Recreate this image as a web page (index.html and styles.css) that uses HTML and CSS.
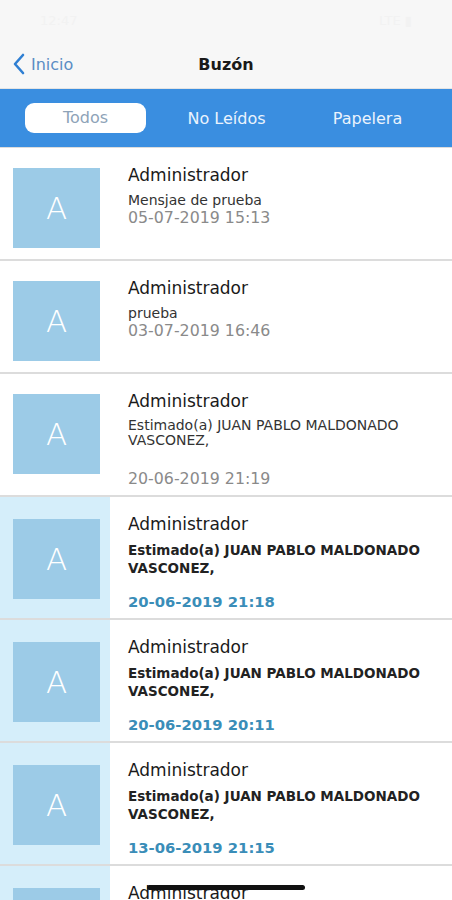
FILE: index.html
```html
<!DOCTYPE html>
<html lang="es">
<head>
  <meta charset="UTF-8">
  <meta name="viewport" content="width=device-width, initial-scale=1.0">
  <title>Buzón</title>
  <link rel="stylesheet" href="styles.css">
</head>
<body>
  <div class="status">
    <span>12:47</span>
    <span>LTE ▮</span>
  </div>

  <header class="nav">
    <a class="back" href="#">
      <svg width="14" height="22" viewBox="0 0 14 22"><path d="M11 2 L3 11 L11 20" fill="none" stroke="#2f7fd3" stroke-width="2.6" stroke-linecap="round" stroke-linejoin="round"/></svg>
      Inicio
    </a>
    <h1>Buzón</h1>
  </header>

  <nav class="tabs">
    <span class="tab active">Todos</span>
    <span class="tab">No Leídos</span>
    <span class="tab">Papelera</span>
  </nav>

  <ul class="inbox">
    <li class="row">
      <div class="thumb"><div class="avatar">A</div></div>
      <div class="msg">
        <h3>Administrador</h3>
        <p class="subject">Mensjae de prueba</p>
        <p class="date">05-07-2019 15:13</p>
      </div>
    </li>
    <li class="row">
      <div class="thumb"><div class="avatar">A</div></div>
      <div class="msg">
        <h3>Administrador</h3>
        <p class="subject">prueba</p>
        <p class="date">03-07-2019 16:46</p>
      </div>
    </li>
    <li class="row long">
      <div class="thumb"><div class="avatar">A</div></div>
      <div class="msg">
        <h3>Administrador</h3>
        <p class="subject">Estimado(a) JUAN PABLO MALDONADO VASCONEZ,</p>
        <p class="date">20-06-2019 21:19</p>
      </div>
    </li>
    <li class="row long unread">
      <div class="thumb"><div class="avatar">A</div></div>
      <div class="msg">
        <h3>Administrador</h3>
        <p class="subject">Estimado(a) JUAN PABLO MALDONADO VASCONEZ,</p>
        <p class="date">20-06-2019 21:18</p>
      </div>
    </li>
    <li class="row long unread">
      <div class="thumb"><div class="avatar">A</div></div>
      <div class="msg">
        <h3>Administrador</h3>
        <p class="subject">Estimado(a) JUAN PABLO MALDONADO VASCONEZ,</p>
        <p class="date">20-06-2019 20:11</p>
      </div>
    </li>
    <li class="row long unread">
      <div class="thumb"><div class="avatar">A</div></div>
      <div class="msg">
        <h3>Administrador</h3>
        <p class="subject">Estimado(a) JUAN PABLO MALDONADO VASCONEZ,</p>
        <p class="date">13-06-2019 21:15</p>
      </div>
    </li>
    <li class="row long unread">
      <div class="thumb"><div class="avatar">A</div></div>
      <div class="msg">
        <h3>Administrador</h3>
        <p class="subject">Estimado(a) JUAN PABLO MALDONADO VASCONEZ,</p>
        <p class="date">13-06-2019 21:10</p>
      </div>
    </li>
  </ul>

  <div class="home-bar"></div>
</body>
</html>
```

FILE: styles.css
```css
body {
  margin: 0;
  height: 900px;
  overflow: hidden;
  font-family: 'DejaVu Sans', sans-serif;
  background: #fff;
  color: #1a1a1a;
  position: relative;
}
.status {
  height: 40px;
  background: #f7f7f7;
  display: flex;
  justify-content: space-between;
  align-items: center;
  padding: 0 40px;
  font-size: 13px;
  color: #f2f2f2;
}
.nav {
  height: 48px;
  background: #f7f7f7;
  display: flex;
  align-items: center;
  position: relative;
}
.back {
  display: flex;
  align-items: center;
  gap: 5px;
  margin-left: 12px;
  color: #5a8dc4;
  text-decoration: none;
  font-size: 16px;
}
.nav h1 {
  position: absolute;
  left: 0;
  right: 0;
  text-align: center;
  margin: 0;
  font-size: 16px;
  font-weight: bold;
  pointer-events: none;
}
.tabs {
  height: 58px;
  background: #3a8ee0;
  display: grid;
  grid-template-columns: repeat(3, 141px);
  align-items: center;
  padding: 0 15px;
  border-top: 1px solid #e4e4e4;
}
.tab {
  justify-self: center;
  text-align: center;
  color: #eaf3fd;
  font-size: 16px;
}
.tab.active {
  width: 121px;
  height: 30px;
  line-height: 30px;
  background: #fff;
  border-radius: 9px;
  color: #8ea3b8;
}
.inbox {
  list-style: none;
  margin: 0;
  padding: 0;
  border-top: 1px solid #dcdcdc;
}
.row {
  display: flex;
  border-bottom: 2px solid #dcdcdc;
}
.thumb {
  width: 110px;
  flex: none;
  padding: 20px 0 11px 13px;
  box-sizing: border-box;
}
.unread .thumb {
  background: #d5eefa;
  padding-top: 22px;
}
.avatar {
  width: 87px;
  height: 80px;
  background: #9ccbe7;
  color: #fff;
  font-size: 31px;
  font-weight: 200;
  display: flex;
  align-items: center;
  justify-content: center;
}
.msg {
  padding: 17px 10px 7px 18px;
}
.msg h3 {
  margin: 0;
  font-size: 17px;
  line-height: 20px;
  font-weight: normal;
}
.subject {
  margin: 7px 0 0;
  font-size: 14px;
  line-height: 17px;
  color: #333;
}
.long .subject {
  height: 52px;
  line-height: 15px;
}
.unread .subject {
  font-weight: bold;
  font-size: 13.5px;
  line-height: 18px;
  color: #222;
}
.date {
  margin: 0;
  font-size: 15.8px;
  line-height: 18px;
  color: #8a8a8a;
}
.unread .date {
  color: #3a8db8;
  font-weight: bold;
  font-size: 14.8px;
}
.home-bar {
  position: absolute;
  left: 147px;
  top: 885px;
  width: 158px;
  height: 5px;
  border-radius: 3px;
  background: #111;
}
```
